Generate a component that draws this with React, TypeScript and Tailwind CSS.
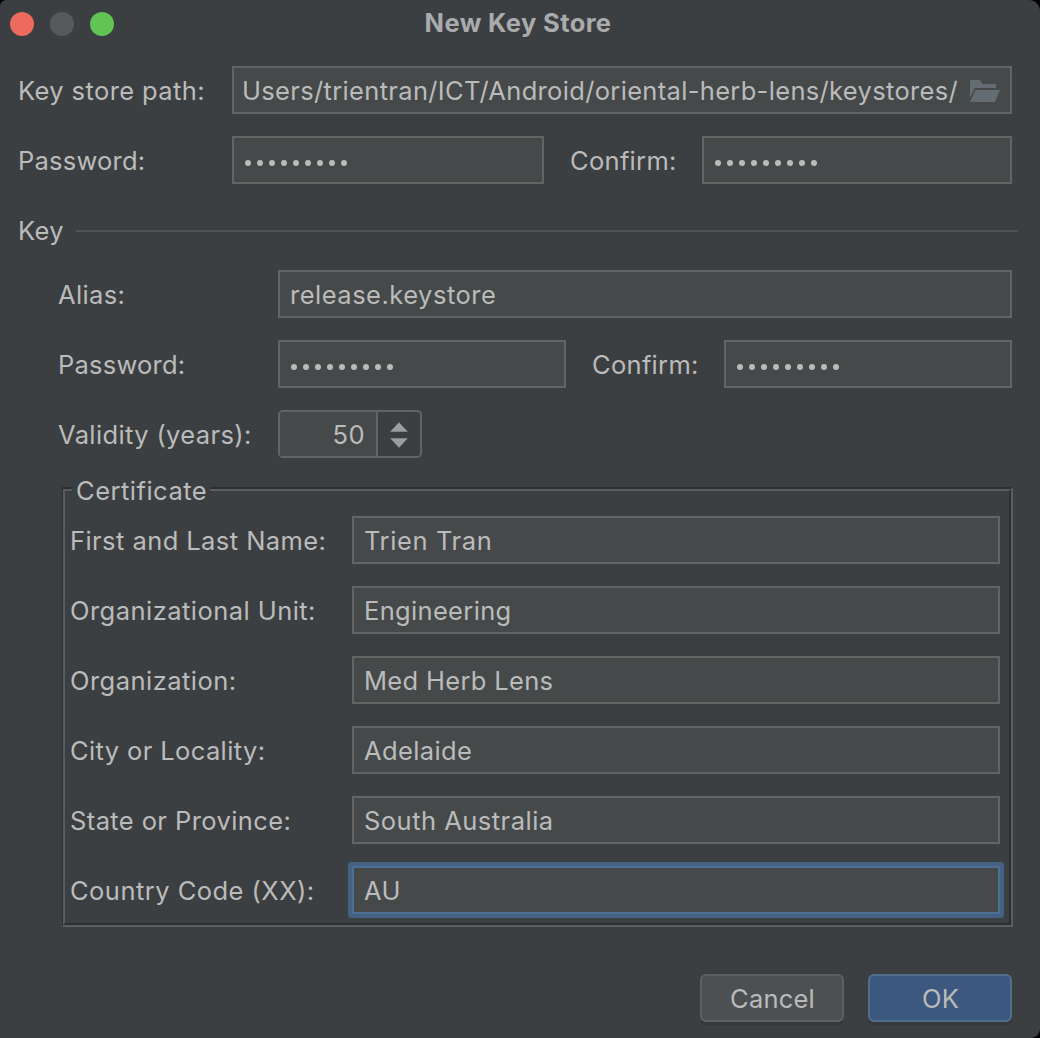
import { ReactNode } from "react";

function Label({ children, className = "" }: { children: ReactNode; className?: string }) {
  return <div className={`shrink-0 pt-0.5 whitespace-pre ${className}`}>{children}</div>;
}

function Field({ children, className = "" }: { children?: ReactNode; className?: string }) {
  return (
    <div className={`flex h-12 min-w-0 items-center border-2 border-[#646464] bg-[#45494a] pt-0.5 ${className}`}>
      {children}
    </div>
  );
}

function Dots() {
  return (
    <div className="mt-[3px] ml-[11px] flex gap-1.5">
      {Array.from({ length: 9 }, (_, i) => (
        <span key={i} className="size-1.5 rounded-full bg-[#bbbbbb]" />
      ))}
    </div>
  );
}

function FolderIcon() {
  return (
    <svg className="mr-2.5 h-[22px] w-[30px] shrink-0" viewBox="0 0 30 22" fill="#626c71">
      <path d="M0 0H10L12.5 4H26V8H4.8L0 18Z" />
      <path d="M5.5 10H30L24.8 22H0Z" />
    </svg>
  );
}

const certificate = [
  { label: "First and Last Name:", value: "Trien Tran", l: "tracking-[0.43px]", v: "tracking-[0.6px]" },
  { label: "Organizational Unit:", value: "Engineering", l: "tracking-[0.46px]", v: "tracking-[0.33px]" },
  { label: "Organization:", value: "Med Herb Lens", l: "tracking-[0.46px]", v: "tracking-[0.33px]" },
  { label: "City or Locality:", value: "Adelaide", l: "tracking-[0.38px]", v: "tracking-[0.38px]" },
  { label: "State or Province:", value: "South Australia", l: "tracking-[0.4px]", v: "tracking-[0.48px]" },
  { label: "Country Code (XX):", value: "AU", l: "tracking-[0.47px]", v: "tracking-[0.4px]", focused: true },
];

export default function App() {
  return (
    <div className="h-[1038px] w-[1040px] overflow-hidden bg-black">
      <div className="flex h-full flex-col rounded-tl-[6px] rounded-tr-[11px] rounded-br-[9px] bg-[#3c3f41] font-['Inter',sans-serif] text-[25.5px] leading-[30px] text-[#bbbbbb]">
        <header className="grid h-12 shrink-0 grid-cols-3 items-center">
          <div className="flex gap-4 pl-2.5">
            <span className="size-6 rounded-full bg-[#ec6a5e]" />
            <span className="size-6 rounded-full bg-[#58595b]" />
            <span className="size-6 rounded-full bg-[#61c554]" />
          </div>
          <h1 className="-mt-[2px] -ml-1 text-center font-bold tracking-[0.38px] whitespace-nowrap text-[#a9abac]">New Key Store</h1>
        </header>

        <div className="mt-[18px] flex items-center pr-7 pl-[18px]">
          <Label className="w-[214px] tracking-[0.4px]">Key store path:</Label>
          <Field className="flex-1">
            <div className="ml-[9px] flex-1 overflow-hidden">
              <div className="-ml-[1px] tracking-[0.33px] whitespace-nowrap">
                Users/trientran/ICT/Android/oriental-herb-lens/keystores/
              </div>
            </div>
            <FolderIcon />
          </Field>
        </div>

        <div className="mt-[22px] flex items-center pr-7 pl-[18px]">
          <Label className="w-[214px] tracking-[0.22px]">Password:</Label>
          <Field className="w-[312px]"><Dots /></Field>
          <Label className="w-[158px] pl-[26px] tracking-[0.3px]">Confirm:</Label>
          <Field className="flex-1"><Dots /></Field>
        </div>

        <div className="mt-8 flex items-center pr-[22px] pl-[18px]">
          <div className="w-[58px] tracking-[0.4px]">Key</div>
          <div className="h-0.5 flex-1 bg-[#515253]" />
        </div>

        <div className="mt-6 flex flex-col gap-[22px] pr-7 pl-[58px]">
          <div className="flex items-center">
            <Label className="w-[220px] tracking-[0.35px]">Alias:</Label>
            <Field className="flex-1 pl-2.5">
              <span className="tracking-[0.5px]">release.keystore</span>
            </Field>
          </div>
          <div className="flex items-center">
            <Label className="w-[220px] tracking-[0.22px]">Password:</Label>
            <Field className="w-72"><Dots /></Field>
            <Label className="w-[158px] pl-[26px] tracking-[0.3px]">Confirm:</Label>
            <Field className="flex-1"><Dots /></Field>
          </div>
          <div className="flex items-center">
            <Label className="w-[220px] tracking-[0.37px]">Validity (years):</Label>
            <div className="flex h-12 w-36 overflow-hidden rounded-[5px] border-2 border-[#646464]">
              <div className="flex flex-1 items-center justify-end border-r-2 border-[#646464] bg-[#45494a] pt-0.5 pr-[11px] tracking-[0.5px]">50</div>
              <div className="flex w-[42px] flex-col items-center justify-center pt-0.5">
                <svg className="h-[26px] w-[18px]" viewBox="0 0 18 26" fill="#9a9da1">
                  <path d="M9 0.2L17.8 9.8H0.2Z" />
                  <path d="M9 25.8L17.8 16.2H0.2Z" />
                </svg>
              </div>
            </div>
          </div>
        </div>

        <div className="relative mt-[29px] mr-[27px] ml-[62px] border-2 border-l border-t-[#2c2e2f] border-r-[#5a5c5e] border-b-[#5a5c5e] border-l-[#2c2e2f]">
          <div className="absolute -top-2.5 left-[9px] h-6 w-[138px] bg-[#3c3f41]" />
          <div className="absolute -top-[13px] left-[13px] tracking-[0.5px]">Certificate</div>
          <div className="flex flex-col gap-[22px] border-2 border-t-[#5a5c5e] border-r-[#2c2e2f] border-b-[#2c2e2f] border-l-[#5a5c5e] pt-[25px] pr-[9px] pb-[9px] pl-[5px]">
            {certificate.map((row) => (
              <div key={row.label} className="flex items-center">
                <Label className={`w-[282px] ${row.l}`}>{row.label}</Label>
                <Field className={`flex-1 pl-2.5 ${row.focused ? "rounded-[1px] border-[#4d6e95]! shadow-[0_0_0_4px_#456184]" : ""}`}>
                  <span className={row.v}>{row.value}</span>
                </Field>
              </div>
            ))}
          </div>
        </div>

        <div className="mt-[47px] flex justify-end gap-6 pr-7">
          <button className="h-12 w-36 rounded-[6px] border-2 border-[#5e6060] bg-[#4c5052] pt-0.5 pl-px tracking-[0.2px] shadow-[0_3px_1px_#363839]">Cancel</button>
          <button className="h-12 w-36 rounded-[6px] border-2 border-[#4f6f8c] bg-[#3d587e] pt-0.5 pl-px tracking-[0.2px] shadow-[0_3px_1px_#363839]">OK</button>
        </div>
      </div>
    </div>
  );
}
